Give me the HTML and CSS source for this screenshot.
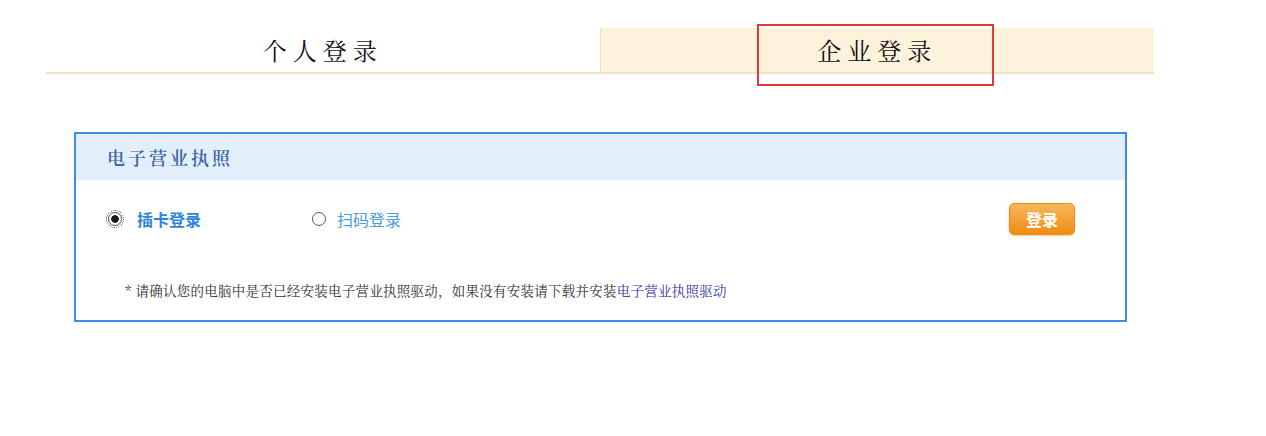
FILE: index.html
```html
<!DOCTYPE html>
<html lang="zh-CN">
<head>
    <meta charset="UTF-8">
    <title>企业登录</title>
    <link rel="stylesheet" href="styles.css">
</head>
<body>
    <div class="tabs">
        <div class="tab">个人登录</div>
        <div class="tab active">
            企业登录
            <div class="mark"></div>
        </div>
    </div>

    <div class="panel">
        <div class="panel-head">电子营业执照</div>
        <div class="panel-body">
            <div class="login-row">
                <label class="option checked">
                    <span class="radio"></span>
                    <span class="option-text">插卡登录</span>
                </label>
                <label class="option">
                    <span class="radio"></span>
                    <span class="option-text">扫码登录</span>
                </label>
                <button class="login-btn">登录</button>
            </div>
            <p class="note">* 请确认您的电脑中是否已经安装电子营业执照驱动，如果没有安装请下载并安装<a href="#">电子营业执照驱动</a></p>
        </div>
    </div>
</body>
</html>
```

FILE: styles.css
```css
body {
    margin: 0;
    background: #fff;
    color: #333;
    font-family: "Noto Sans CJK SC", sans-serif;
}
.tabs {
    display: flex;
    width: 1108px;
    height: 44px;
    margin: 28px 0 0 46px;
    border-bottom: 2px solid #f2e2c6;
}
.tab {
    flex: 1;
    position: relative;
    text-align: center;
    line-height: 44px;
    font-family: "Noto Serif CJK SC", "Noto Sans CJK SC", serif;
    font-size: 24px;
    letter-spacing: 6px;
    color: #111;
}
.tab.active {
    background: #fdf3dd;
    border-left: 1px solid #eee1c8;
}
.mark {
    position: absolute;
    left: 156px;
    top: -4px;
    width: 233px;
    height: 58px;
    border: 2px solid #e03a36;
}
.panel {
    width: 1049px;
    margin: 58px 0 0 74px;
    border: 2px solid #3a8ee6;
}
.panel-head {
    height: 46px;
    line-height: 46px;
    padding-left: 31px;
    background: #e2effa;
    color: #3b63a6;
    font-family: "Noto Serif CJK SC", "Noto Sans CJK SC", serif;
    font-size: 18px;
    font-weight: 600;
    letter-spacing: 3px;
}
.panel-body {
    padding: 23px 50px 22px 32px;
}
.login-row {
    display: flex;
    align-items: center;
    height: 32px;
}
.option {
    display: flex;
    align-items: center;
    width: 204px;
    color: #4a9be0;
    font-size: 16px;
}
.option.checked {
    color: #2e86d8;
    font-weight: bold;
}
.radio {
    width: 12px;
    height: 12px;
    border: 1px solid #555;
    border-radius: 50%;
    margin-right: 11px;
    background: #fff;
}
.option.checked .radio {
    margin-right: 15px;
    background: radial-gradient(circle, #1a1a1a 0 3.5px, #fff 4px);
    outline: 1px dotted #444;
    outline-offset: 1px;
}
.login-btn {
    margin-left: auto;
    width: 66px;
    height: 32px;
    border: 1px solid #e8901e;
    border-radius: 5px;
    background: linear-gradient(#f8b85a, #ee8c14);
    box-shadow: 0 1px 2px rgba(200, 120, 20, 0.4);
    color: #fff;
    font-family: "Noto Sans CJK SC", sans-serif;
    font-size: 16px;
    font-weight: bold;
    cursor: pointer;
}
.note {
    margin: 47px 0 0 17px;
    font-family: "Noto Serif CJK SC", "Noto Sans CJK SC", serif;
    font-size: 13.5px;
    letter-spacing: 0.25px;
    line-height: 16px;
    color: #333;
}
.note a {
    color: #3636a8;
    text-decoration: none;
}
```
